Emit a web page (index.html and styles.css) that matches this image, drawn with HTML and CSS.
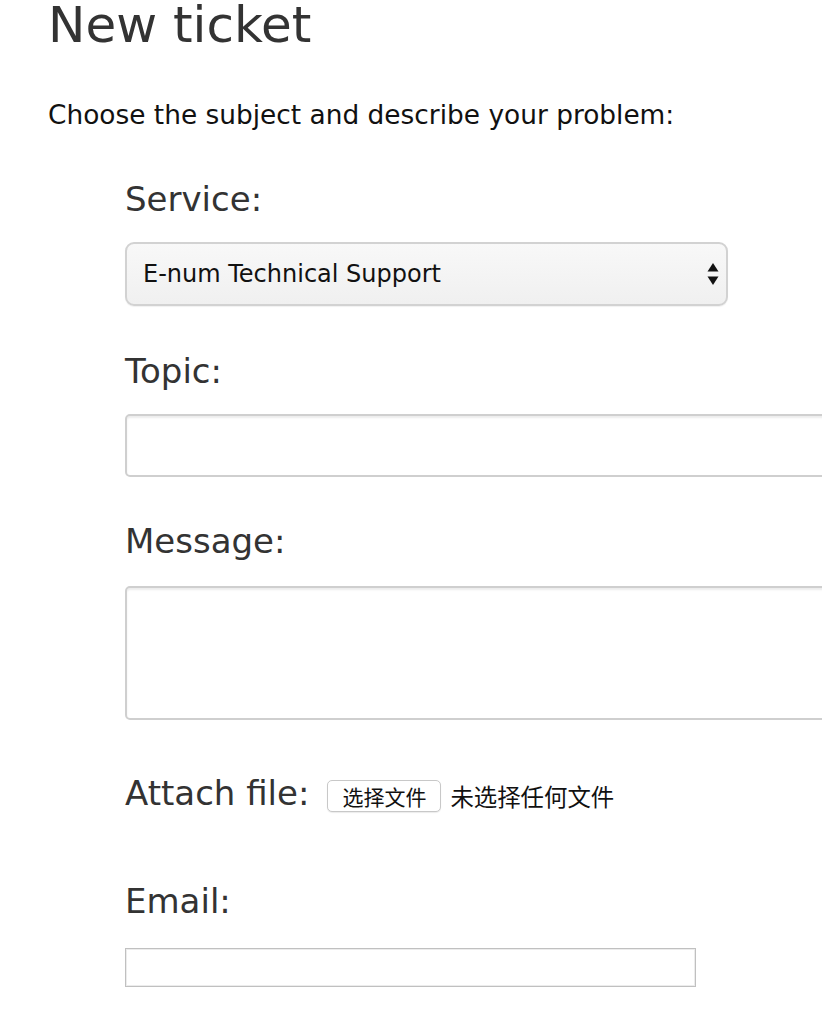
FILE: index.html
```html
<!DOCTYPE html>
<html lang="en">
<head>
<meta charset="utf-8">
<title>New ticket</title>
<link rel="stylesheet" href="styles.css">
</head>
<body>
<div class="page">
  <h1 class="title">New ticket</h1>
  <p class="intro">Choose the subject and describe your problem:</p>
  <form class="ticket-form">
    <div class="field field-service">
      <label class="label" for="service">Service:</label>
      <div class="select-wrap">
        <select id="service" class="select">
          <option>E-num Technical Support</option>
        </select>
        <svg class="select-arrows" width="12" height="22" viewBox="0 0 12 22" aria-hidden="true">
          <path d="M6 0 L11.5 8.5 L0.5 8.5 Z" fill="#111"/>
          <path d="M6 22 L11.5 13.5 L0.5 13.5 Z" fill="#111"/>
        </svg>
      </div>
    </div>
    <div class="field field-topic">
      <label class="label" for="topic">Topic:</label>
      <input id="topic" class="text-input" type="text">
    </div>
    <div class="field field-message">
      <label class="label" for="message">Message:</label>
      <textarea id="message" class="textarea"></textarea>
    </div>
    <div class="field-attach">
      <span class="label">Attach file:</span>
      <span class="file-button">选择文件</span>
      <span class="file-status">未选择任何文件</span>
    </div>
    <div class="field field-email">
      <label class="label" for="email">Email:</label>
      <input id="email" class="email-input" type="text">
    </div>
  </form>
</div>
</body>
</html>
```

FILE: styles.css
```css
html, body {
  margin: 0;
  padding: 0;
  background: #ffffff;
  overflow: hidden;
}

body {
  font-family: "DejaVu Sans", Verdana, sans-serif;
  color: #111111;
}

.page {
  padding-left: 48px;
}

.title {
  margin: 0;
  font-size: 50px;
  line-height: 50px;
  font-weight: normal;
  color: #333333;
}

.intro {
  margin: 50px 0 0 0;
  font-size: 26.4px;
  line-height: 30px;
  color: #111111;
}

.ticket-form {
  margin-left: 77px;
  display: flex;
  flex-direction: column;
}

.field {
  display: flex;
  flex-direction: column;
  align-items: flex-start;
}

.label {
  display: block;
  font-size: 34px;
  line-height: 40px;
  color: #333333;
}

.field-service { margin-top: 49px; }
.field-topic { margin-top: 45px; }
.field-message { margin-top: 44px; }
.field-email { margin-top: 68px; }

.select-wrap {
  position: relative;
  margin-top: 23px;
}

.select {
  -webkit-appearance: none;
  appearance: none;
  width: 603px;
  height: 64px;
  box-sizing: border-box;
  padding: 0 40px 0 16px;
  font-family: "DejaVu Sans", Verdana, sans-serif;
  font-size: 24px;
  color: #111111;
  background: linear-gradient(#f8f8f8, #f0f0f0);
  border: 2px solid #d2d2d2;
  border-radius: 9px;
  box-shadow: 0 1px 1px rgba(0, 0, 0, 0.06);
  outline: none;
}

.select-arrows {
  position: absolute;
  right: 9px;
  top: 21px;
  pointer-events: none;
}

.text-input {
  margin-top: 23px;
  width: 760px;
  height: 63px;
  box-sizing: border-box;
  border: 2px solid #cfcfcf;
  border-radius: 5px;
  background: #ffffff;
  box-shadow: inset 0 2px 2px rgba(0, 0, 0, 0.08);
  outline: none;
}

.textarea {
  margin-top: 25px;
  width: 760px;
  height: 134px;
  box-sizing: border-box;
  border: 2px solid #cfcfcf;
  border-radius: 5px;
  background: #ffffff;
  box-shadow: inset 0 2px 2px rgba(0, 0, 0, 0.08);
  outline: none;
  resize: none;
}

.field-attach {
  margin-top: 53px;
  display: flex;
  align-items: center;
  height: 40px;
}

.file-button {
  margin-left: 18px;
  display: inline-flex;
  align-items: center;
  justify-content: center;
  box-sizing: border-box;
  width: 114px;
  height: 32px;
  margin-top: 6px;
  font-family: "Noto Sans CJK SC", "DejaVu Sans", sans-serif;
  font-size: 21px;
  color: #111111;
  background: #ffffff;
  border: 1px solid #c8c8c8;
  border-radius: 5px;
  box-shadow: 0 1px 1px rgba(0, 0, 0, 0.08);
}

.file-status {
  margin-left: 9px;
  margin-top: 6px;
  font-family: "Noto Sans CJK SC", "DejaVu Sans", sans-serif;
  font-size: 23.4px;
  color: #111111;
}

.email-input {
  margin-top: 27px;
  width: 571px;
  height: 39px;
  box-sizing: border-box;
  border: 1px solid #c0c0c0;
  box-shadow: inset 0 0 0 1px #ececec;
  border-radius: 0;
  background: #ffffff;
  outline: none;
}
```
